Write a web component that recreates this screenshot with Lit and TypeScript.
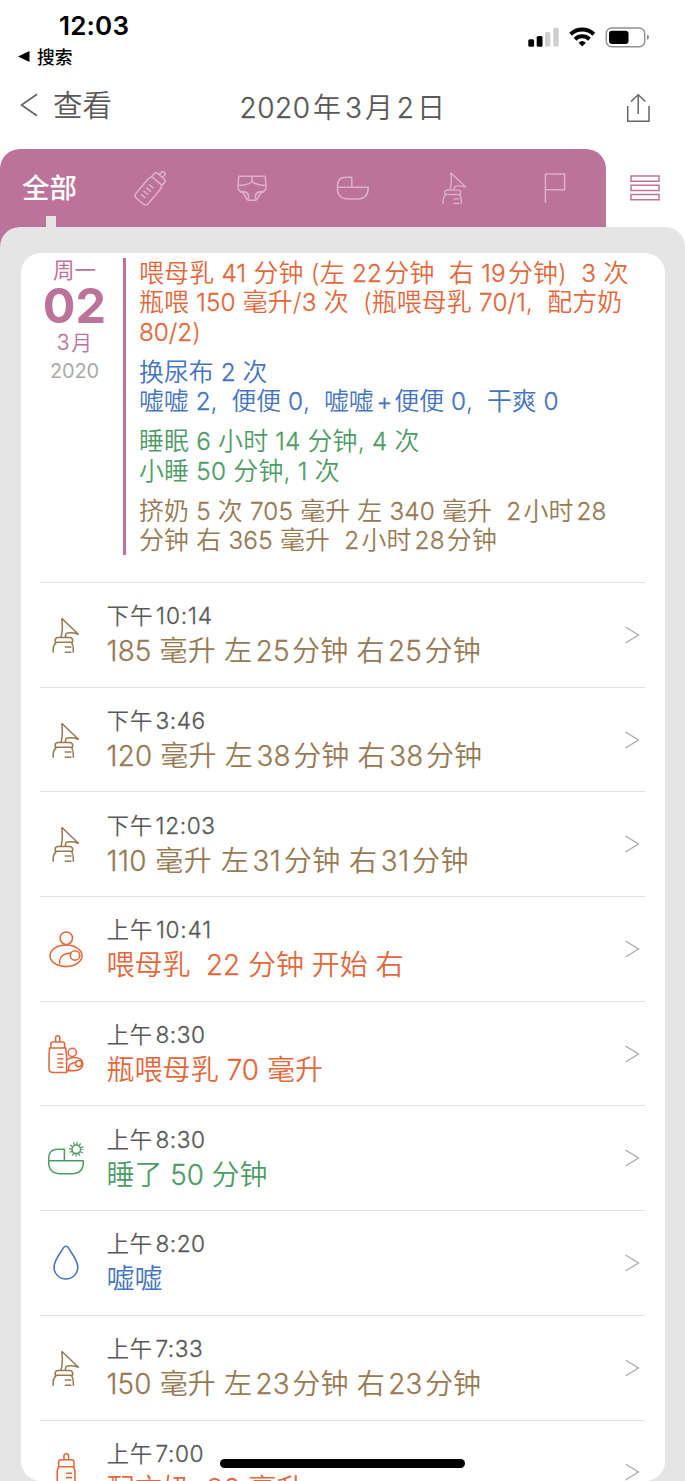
import { LitElement, html, svg, css, TemplateResult } from "lit";
import { customElement, property } from "lit/decorators.js";
import { classMap } from "lit/directives/class-map.js";
import { styleMap } from "lit/directives/style-map.js";

type Tone = "orange" | "blue" | "green" | "brown";
interface Line { text: string; ls?: number }
interface Entry { icon: string; tone: Tone; time: Line; detail: Line }

const HAN = /[\u4e00-\u9fff]/;

/** Splits a line into number and text runs, with a small gap where a number touches a Han character. */
function mixed(line: Line) {
  const parts = line.text.split(/([0-9][0-9:\/]*|\+)/).filter((p) => p !== "");
  return html`<span class="run" style=${styleMap({ letterSpacing: `${line.ls ?? 0}px` })}>${parts.map((p, i) => {
    if (!/^[0-9+]/.test(p)) return p;
    const before = parts[i - 1] ?? "";
    const after = parts[i + 1] ?? "";
    const cls = classMap({
      num: true,
      gl: HAN.test(before.slice(-1)),
      gr: HAN.test(after.slice(0, 1)),
    });
    return html`<span class=${cls}>${p}</span>`;
  })}</span>`;
}

const pump = svg`
  <path d="M17.700 5.300 34.400 21.200 C30 19.800 25 19.400 22.200 20.400 Q21.400 21.500 21.400 24.200 M17.700 5.300 C18.800 12 18.600 18 17 24.400"/>
  <path d="M11.200 29V27.200q0-2.800 2.800-2.800h11.800q2.800 0 2.800 2.800V29M10.800 29.200h18.200M12.200 29.600q-3 2.600-3 6.400v3.800M27.600 29.600q1.700 2.600 1.700 6.400v3.800M20.800 34h6.600M20.800 39.200h6.600"/>`;

const icons: Record<string, TemplateResult> = {
  pump,
  pumpSmall: svg`<g transform="translate(2.6 1.9) scale(.91)">${pump}</g>`,
  nursing: svg`
    <circle cx="22.300" cy="11.200" r="6.200"/><ellipse cx="22" cy="28.800" rx="16" ry="10.800"/>
    <circle cx="31" cy="28.400" r="4.700"/><path d="M15.600 37.600V34C16 29 20 26.400 27.200 26"/>`,
  bottleBaby: svg`
    <path d="M11.600 10V6q0-2.200 2.100-2.200T15.800 6v4M6.800 16v-4q0-2 2-2h9.800q2 0 2 2v4"/>
    <path d="M5.400 16h16.400v3.400q.8 1.600.8 3V40.400H9q-4 0-4-4V22q0-1.600.4-2.600zM13.400 22.300h6M13.400 26.700h6M13.400 31h6M13.400 35.200h6"/>
    <circle cx="28.300" cy="20.400" r="4.100"/>
    <path d="M23 27.600Q26 25.400 30 25.400C35.400 25.400 38.800 28 38.800 32S35.400 38.600 30 38.600H23"/>
    <circle cx="34.700" cy="31.500" r="3.100"/><path d="M24.600 38.400V35.500Q25.500 31.300 31.500 30.300"/>`,
  cradleSun: svg`
    <path d="M4.700 24.700V22.500q0-9.200 9.200-9.200H20.400V24.700M4.700 24.700H39.300V26q0 11.700-11.700 11.700H16.400Q4.700 37.700 4.700 26z"/>
    <circle cx="32.300" cy="13.300" r="4.300"/>
    <circle cx="32.300" cy="13.300" r="5.900" stroke-width="2.800" stroke-dasharray="1.190 1.900" stroke-dashoffset=".6"/>`,
  drop: svg`<path d="M21.900 5.300c1 0 1.900.6 2.500 1.600 3.600 5.800 9.400 12.600 9.400 19.200a11.900 11.900 0 0 1-23.800 0c0-6.600 5.800-13.400 9.400-19.200.6-1 1.500-1.600 2.500-1.600z"/>`,
  bottle: svg`
    <path d="M20 9.700V6q0-2.200 2.300-2.200T24.600 6v3.700M14.600 16.700v-4.400q0-2.600 2.600-2.600h10.200q2.600 0 2.600 2.600v4.400z"/>
    <path d="M14.800 16.700q-1.600 2.400-1.600 5V37q0 4 4 4h9.800q4 0 4-4V21.700q0-2.600-1.600-5M22 23.200h6M22 27.600h6M22 32h6"/>`,
  bottleTilt: svg`<g transform="rotate(40 22 22)">
    <path d="M19.800 6.500V3.600q0-2.200 2.200-2.200t2.200 2.200v2.900M15.200 12.800V9q0-2.400 2.400-2.400h8.800q2.400 0 2.400 2.400v3.800z"/>
    <path d="M16 12.800q-2 2-2 4.600V35.600q0 3.600 3.600 3.600h8.800q3.600 0 3.600-3.600V17.400q0-2.600-2-4.600M18.200 20.600h6M18.200 24.800h6M18.200 29h6M18.200 33.200h6"/></g>`,
  diaper: svg`
    <path d="M9 10.300h26q1.200 5.600.9 11.500-.3 3-2.800 4-3.400 1.500-4.600 4.800-.5 2.700-2.700 3.700h-7.600q-2.200-1-2.700-3.700-1.200-3.300-4.600-4.800-2.500-1-2.800-4-.3-5.900.9-11.500zM8 19.600q9-.3 13.500-3.600h1q4.500 3.300 13.500 3.600M22 10.300V16"/>
    <path d="M10 25.800q6-.8 8.200 2.600 1.200 2.800-.6 5M34 25.800q-6-.8-8.200 2.600-1.200 2.800.6 5"/>`,
  cradle: svg`<path d="M6.400 21.300V20q0-8.700 8.700-8.700h5.700V21.300M6.400 21.300H37.200V22q0 11-11 11H17.400Q6.400 33 6.400 22z"/>`,
  flag: svg`<path d="M12.400 36.800V8H31.600V23.700H12.400"/>`,
};

@customElement("line-icon")
class LineIcon extends LitElement {
  @property() name = "pump";
  static styles = css`
    :host { display: block; width: 44px; height: 44px; flex: none; }
    svg { display: block; width: 44px; height: 44px; overflow: visible; fill: none; stroke: currentColor;
      stroke-width: 1.55; stroke-linejoin: round; stroke-linecap: butt; }
  `;
  render() {
    return html`<svg viewBox="0 0 44 44">${icons[this.name]}</svg>`;
  }
}

@customElement("app-root")
class AppRoot extends LitElement {
  tabs = ["bottleTilt", "diaper", "cradle", "pumpSmall", "flag"];

  summary: { tone: Tone; lines: Line[] }[] = [
    { tone: "orange", lines: [
      { text: "喂母乳 41 分钟 (左 22分钟\u00a0 右 19分钟)\u00a0 3 次", ls: 0.19 },
      { text: "瓶喂 150 毫升/3 次\u00a0 (瓶喂母乳 70/1,\u00a0 配方奶", ls: 0.14 },
      { text: "80/2)" },
    ] },
    { tone: "blue", lines: [
      { text: "换尿布 2 次" },
      { text: "嘘嘘 2,\u00a0 便便 0,\u00a0 嘘嘘+便便 0,\u00a0 干爽 0", ls: -0.05 },
    ] },
    { tone: "green", lines: [
      { text: "睡眠 6 小时 14 分钟, 4 次", ls: 0.14 },
      { text: "小睡 50 分钟, 1 次", ls: 0.18 },
    ] },
    { tone: "brown", lines: [
      { text: "挤奶 5 次 705 毫升 左 340 毫升\u00a0 2小时28", ls: 0.13 },
      { text: "分钟 右 365 毫升\u00a0 2小时28分钟", ls: 0.16 },
    ] },
  ];

  entries: Entry[] = [
    { icon: "pump", tone: "brown", time: { text: "下午10:14", ls: 0.85 }, detail: { text: "185 毫升 左25分钟 右25分钟", ls: 0.2 } },
    { icon: "pump", tone: "brown", time: { text: "下午3:46", ls: 0.55 }, detail: { text: "120 毫升 左38分钟 右38分钟", ls: 0.2 } },
    { icon: "pump", tone: "brown", time: { text: "下午12:03", ls: 0.6 }, detail: { text: "110 毫升 左31分钟 右31分钟", ls: 0.48 } },
    { icon: "nursing", tone: "orange", time: { text: "上午10:41", ls: 0.75 }, detail: { text: "喂母乳\u00a0 22 分钟 开始 右", ls: -0.04 } },
    { icon: "bottleBaby", tone: "orange", time: { text: "上午8:30", ls: 0.5 }, detail: { text: "瓶喂母乳 70 毫升", ls: 0.06 } },
    { icon: "cradleSun", tone: "green", time: { text: "上午8:30", ls: 0.5 }, detail: { text: "睡了 50 分钟", ls: -0.05 } },
    { icon: "drop", tone: "blue", time: { text: "上午8:20", ls: 0.5 }, detail: { text: "嘘嘘" } },
    { icon: "pump", tone: "brown", time: { text: "上午7:33", ls: 0.5 }, detail: { text: "150 毫升 左23分钟 右23分钟", ls: 0.17 } },
    { icon: "bottle", tone: "orange", time: { text: "上午7:00", ls: 0.55 }, detail: { text: "配方奶\u00a0 80 毫升" } },
  ];

  static styles = css`
    :host { display: flex; flex-direction: column; position: relative; width: 685px; height: 1481px; overflow: hidden;
      background: #fff; color: #58585a; font-family: Inter, "Noto Sans CJK SC", sans-serif; font-weight: 350; }
    * { box-sizing: border-box; }
    svg { display: block; fill: none; }
    .run { white-space: nowrap; }
    .num { font-weight: 350; -webkit-text-stroke: .3px currentColor; }
    .gl { margin-left: .12em; }
    .gr { margin-right: .09em; }
    .orange { color: #e0683c; }
    .blue { color: #4573bd; }
    .green { color: #4f9b68; }
    .brown { color: #957a54; }

    .status { flex: none; height: 75px; display: flex; justify-content: space-between; color: #000; }
    .clock { padding: 10px 0 0 59px; font-size: 26px; line-height: 31px; font-weight: 600; letter-spacing: .2px; }
    .back-app { display: flex; align-items: center; gap: 7px; padding-left: 18px; height: 30px; font-size: 17.800px; font-weight: 500; }
    .system { padding: 24px 35px 0 0; }

    .nav { flex: none; height: 74px; display: grid; grid-template-columns: 200px 1fr 200px; align-items: center; }
    .back { display: flex; align-items: center; gap: 15px; padding: 0 0 14px 20px; font-size: 29.500px; line-height: 40px; }
    .title { text-align: center; font-size: 28px; line-height: 40px; padding: 0 0 8px 0; }
    .share { display: flex; justify-content: flex-end; padding: 0 35px 8px 0; }

    .tabbar { flex: none; height: 108px; margin-bottom: -30px; display: flex; align-items: flex-start; }
    .tabs { width: 606px; height: 108px; display: grid; grid-template-columns: repeat(6, 1fr); background: #bc7399;
      border-radius: 20px 20px 0 0; padding-bottom: 30px; color: #dfaecb; }
    .tab { display: flex; align-items: center; justify-content: center; position: relative; padding-right: 2px; }
    .tab.active { color: #fff; font-size: 27.500px; font-weight: 500; padding-bottom: 4px; }
    .tab.active::after { content: ""; position: absolute; left: 46px; bottom: 0; width: 10px; height: 11px; background: #e5e5e5; }
    .menu { flex: 1; height: 78px; display: flex; align-items: center; justify-content: center; padding-right: 2px; }

    .panel { flex: 1; min-height: 0; position: relative; background: #e5e5e5; border-radius: 20px 20px 0 0; padding: 26px 20.500px 0; }
    .card { height: 100%; background: #fff; border-radius: 20px; overflow: hidden; padding: 0 19.500px; }

    .day { display: flex; height: 329px; }
    .date { width: 69px; padding-top: 4px; display: flex; flex-direction: column; align-items: center; color: #bc7399; }
    .weekday { font-size: 21.500px; line-height: 26px; font-weight: 400; }
    .dom { font-size: 48.500px; line-height: 46px; font-weight: 700; }
    .month { font-size: 21px; line-height: 28px; }
    .year { font-size: 20px; line-height: 28px; color: #aaa; font-weight: 400; letter-spacing: -.2px; }
    .summary { margin: 5px 0 27px 14px; border-left: 3px solid #bc7399; padding: 1px 0 0 13px; flex: 1; min-width: 0;
      display: flex; flex-direction: column; gap: 10.700px; font-size: 24.900px; line-height: 29.400px; }
    .summary .num { font-size: 24.300px; }
    .line { height: 29.400px; }

    .entry { height: 104.700px; border-top: 1px solid #e2e2e2; display: flex; align-items: center; padding: 0 4px; }
    .text { flex: 1; min-width: 0; padding: 3px 0 0 18.500px; }
    .time { font-size: 22.600px; line-height: 30px; height: 30px; }
    .detail { font-size: 28px; line-height: 40px; height: 40px; }
    .detail .num { font-size: 27.800px; }
    .time .num { font-size: 22.700px; }
    .chev { flex: none; margin-right: 1px; }
    .home { position: absolute; left: 220px; top: 1459px; width: 245px; height: 9px; border-radius: 5px; background: #000; }
  `;

  render() {
    return html`
      <div class="status">
        <div>
          <div class="clock">12:03</div>
          <div class="back-app"><svg width="12" height="11"><path d="M0 5.500 11.500 0V11z" fill="#000"/></svg><span>搜索</span></div>
        </div>
        <svg class="system" width="157" height="50" viewBox="528 24 122 26">
          <g fill="#000"><rect x="528.300" y="39.300" width="5.800" height="7.400" rx="1.500"/><rect x="536.700" y="36" width="5.800" height="10.700" rx="1.500"/></g>
          <g fill="#cfcfcf"><rect x="545" y="32" width="5.400" height="14.700" rx="1.500"/><rect x="553.300" y="27.700" width="5.400" height="19" rx="1.500"/></g>
          <g stroke="#000" stroke-width="4"><path d="M570.600 34.200a16.600 16.600 0 0 1 23.200 0"/><path d="M575 39.200a10.400 10.400 0 0 1 14.400 0"/></g>
          <path d="M578.600 42.700a5.400 5.400 0 0 1 7.200 0L582.200 46.500z" fill="#000"/>
          <rect x="606.300" y="28" width="38.400" height="18.800" rx="5.500" stroke="#8f8f8f" stroke-width="1.400"/>
          <rect x="609" y="30.700" width="19.500" height="13.400" rx="3" fill="#000"/>
          <path d="M647 34.500q2 .8 2 2.800t-2 2.800z" fill="#8f8f8f"/>
        </svg>
      </div>

      <div class="nav">
        <div class="back">
          <svg width="18" height="24" viewBox="0 0 18 24"><path d="M17 1.300 1.500 12 17 22.700" stroke="#666" stroke-width="1.700"/></svg>
          <span>查看</span>
        </div>
        <div class="title">${mixed({ text: "2020年3月2日", ls: 0.5 })}</div>
        <div class="share">
          <svg width="24" height="30" viewBox="626 93 24 30"><path d="M627.700 106V121.300H649V106M638.200 114V95M631 101.500 638.200 94.800 645.400 101.500" stroke="#666" stroke-width="1.500"/></svg>
        </div>
      </div>

      <div class="tabbar">
        <div class="tabs">
          <div class="tab active">全部</div>
          ${this.tabs.map((t) => html`<div class="tab"><line-icon name=${t}></line-icon></div>`)}
        </div>
        <div class="menu">
          <svg width="30" height="26" viewBox="0 0 30 26"><path d="M1 1h28v5.200H1zM1 10.300h28v5.200H1zM1 19.600h28v5.200H1z" stroke="#bc7399" stroke-width="1.500"/></svg>
        </div>
      </div>

      <div class="panel">
        <div class="card">
          <div class="day">
            <div class="date">
              <div class="weekday">周一</div>
              <div class="dom">02</div>
              <div class="month">${mixed({ text: "3月" })}</div>
              <div class="year">2020</div>
            </div>
            <div class="summary">
              ${this.summary.map((b) => html`<div class=${b.tone}>${b.lines.map((l) => html`<div class="line">${mixed(l)}</div>`)}</div>`)}
            </div>
          </div>
          ${this.entries.map((e) => html`
            <div class="entry">
              <line-icon class=${e.tone} name=${e.icon}></line-icon>
              <div class="text">
                <div class="time">${mixed(e.time)}</div>
                <div class="detail ${e.tone}">${mixed(e.detail)}</div>
              </div>
              <svg class="chev" width="16" height="18" viewBox="0 0 16 18"><path d="M1.500 1 14.500 9 1.500 17" stroke="#aaa" stroke-width="1.300"/></svg>
            </div>`)}
        </div>
      </div>
      <div class="home"></div>
    `;
  }
}
